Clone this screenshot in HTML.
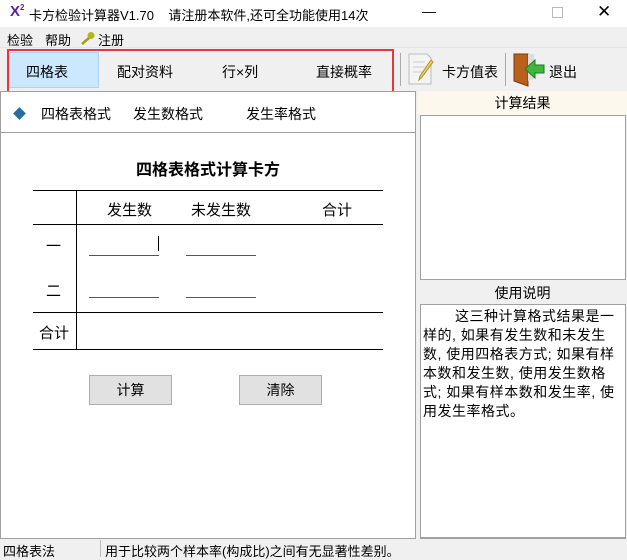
<!DOCTYPE html>
<html><head><meta charset="utf-8"><style>
*{margin:0;padding:0;box-sizing:border-box}
body{width:627px;height:557px;position:relative;overflow:hidden;background:#f0f0f0;font-family:"Liberation Sans","Noto Sans CJK SC","WenQuanYi Zen Hei",sans-serif;font-size:13px;color:#000}
.a{position:absolute;white-space:nowrap}
.hl{position:absolute;height:1px;background:#000}
.ul{position:absolute;height:1px;background:#555;width:70px}
</style></head><body>
<div class="a" style="left:0;top:0;width:627px;height:27px;background:#fff"></div>
<div class="a" style="left:10px;top:3px;font-size:15px;font-weight:bold;color:#5a1fa0">X<sup style="font-size:8px">2</sup></div>
<div class="a" style="left:29px;top:5px;font-size:13px">卡方检验计算器V1.70&nbsp;&nbsp;&nbsp;&nbsp;请注册本软件,还可全功能使用14次</div>
<div class="a" style="left:422px;top:3px;font-size:14px">—</div>
<div class="a" style="left:552px;top:7px;width:11px;height:11px;border:1px solid #bbb"></div>
<div class="a" style="left:597px;top:2px;font-size:17px">✕</div>
<div class="a" style="left:0;top:27px;width:627px;height:20px;background:#f0f0f0"></div>
<div class="a" style="left:7px;top:30px">检验</div>
<div class="a" style="left:45px;top:30px">帮助</div>
<svg class="a" style="left:80px;top:31px" width="16" height="14"><circle cx="11" cy="4.5" r="3.5" fill="#b5b520"/><path d="M9 7 L2 13" stroke="#a0a010" stroke-width="2.5"/></svg>
<div class="a" style="left:98px;top:30px">注册</div>
<div class="a" style="left:0;top:47px;width:627px;height:1px;background:#e3e3e3"></div>
<div class="a" style="left:7px;top:49px;width:387px;height:45px;border:2px solid #e0393e"></div>
<div class="a" style="left:9px;top:52px;width:90px;height:36px;background:#cce8ff;border:1px solid #a8d4f5"></div>
<div class="a" style="left:26px;top:62px;font-size:14px">四格表</div>
<div class="a" style="left:117px;top:62px;font-size:14px">配对资料</div>
<div class="a" style="left:222px;top:62px;font-size:14px">行×列</div>
<div class="a" style="left:316px;top:62px;font-size:14px">直接概率</div>
<div class="a" style="left:400px;top:53px;width:1px;height:33px;background:#aaa"></div>
<svg class="a" style="left:407px;top:52px" width="28" height="34"><path d="M2 2h18l4 4v26H2z" fill="#f4f4f4" stroke="#bbb"/><path d="M6 10h12M6 15h12M6 20h10" stroke="#ccc"/><path d="M24 8 L13 24 L12 28 L15 25 L26 10z" fill="#f0d060" stroke="#b09020"/></svg>
<div class="a" style="left:442px;top:62px;font-size:14px">卡方值表</div>
<div class="a" style="left:505px;top:53px;width:1px;height:33px;background:#aaa"></div>
<svg class="a" style="left:511px;top:51px" width="36" height="36"><path d="M3 3h14v32L3 30z" fill="#b8601c" stroke="#7a3a10"/><path d="M17 3h6v25l-6 2z" fill="#ddd"/><path d="M14 18 L24 9 V14 H33 V22 H24 V27z" fill="#3cb83c" stroke="#1d7a1d"/></svg>
<div class="a" style="left:549px;top:62px;font-size:14px">退出</div>
<!-- left panel -->
<div class="a" style="left:0;top:91px;width:416px;height:448px;background:#fff;border:1px solid #a0a0a0"></div>
<div class="a" style="left:15px;top:109px;width:9px;height:9px;background:#2c6c9c;transform:rotate(45deg)"></div>
<div class="a" style="left:41px;top:104px;font-size:14px">四格表格式</div>
<div class="a" style="left:133px;top:104px;font-size:14px">发生数格式</div>
<div class="a" style="left:246px;top:104px;font-size:14px">发生率格式</div>
<div class="a" style="left:1px;top:132px;width:414px;height:1px;background:#a0a0a0"></div>
<div class="a" style="left:0;top:156px;width:416px;text-align:center;font-size:16px;font-weight:bold">四格表格式计算卡方</div>
<div class="hl" style="left:33px;top:190px;width:350px"></div>
<div class="hl" style="left:33px;top:224px;width:350px"></div>
<div class="hl" style="left:33px;top:312px;width:350px"></div>
<div class="hl" style="left:33px;top:349px;width:350px"></div>
<div class="a" style="left:76px;top:190px;width:1px;height:159px;background:#000"></div>
<div class="a" style="left:107px;top:199px;font-size:15px">发生数</div>
<div class="a" style="left:191px;top:199px;font-size:15px">未发生数</div>
<div class="a" style="left:322px;top:199px;font-size:15px">合计</div>
<div class="a" style="left:46px;top:235px;font-size:15px">一</div>
<div class="a" style="left:46px;top:280px;font-size:15px">二</div>
<div class="a" style="left:39px;top:322px;font-size:15px">合计</div>
<div class="ul" style="left:89px;top:255px"></div>
<div class="ul" style="left:186px;top:255px"></div>
<div class="ul" style="left:89px;top:297px"></div>
<div class="ul" style="left:186px;top:297px"></div>
<div class="a" style="left:158px;top:236px;width:1px;height:15px;background:#000"></div>
<div class="a" style="left:89px;top:375px;width:83px;height:30px;background:#e1e1e1;border:1px solid #adadad;text-align:center;line-height:28px;font-size:14px">计算</div>
<div class="a" style="left:239px;top:375px;width:83px;height:30px;background:#e1e1e1;border:1px solid #adadad;text-align:center;line-height:28px;font-size:14px">清除</div>
<!-- right panel -->
<div class="a" style="left:418px;top:91px;width:209px;height:24px;background:#fcf8ee;text-align:center;font-size:14px;line-height:24px">计算结果</div>
<div class="a" style="left:420px;top:115px;width:206px;height:165px;background:#fff;border:1px solid #a0a0a0"></div>
<div class="a" style="left:418px;top:283px;width:209px;height:21px;text-align:center;font-size:14px;line-height:21px">使用说明</div>
<div class="a" style="left:420px;top:304px;width:206px;height:235px;background:#fff;border:1px solid #a0a0a0;border-bottom:2px solid #a0a0a0"></div>
<div class="a" style="left:423px;top:307px;font-size:14px;line-height:19px;letter-spacing:0.5px">
<div style="padding-left:32px">这三种计算格式结果是一</div>
<div>样的, 如果有发生数和未发生</div>
<div>数, 使用四格表方式; 如果有样</div>
<div>本数和发生数, 使用发生数格</div>
<div>式; 如果有样本数和发生率, 使</div>
<div>用发生率格式。</div>
</div>
<!-- status -->
<div class="a" style="left:0;top:539px;width:627px;height:18px;background:#f0f0f0"></div>
<div class="a" style="left:3px;top:541px;font-size:13px">四格表法</div>
<div class="a" style="left:100px;top:540px;width:1px;height:17px;background:#bbb"></div>
<div class="a" style="left:105px;top:541px;font-size:13px">用于比较两个样本率(构成比)之间有无显著性差别。</div>
</body></html>
